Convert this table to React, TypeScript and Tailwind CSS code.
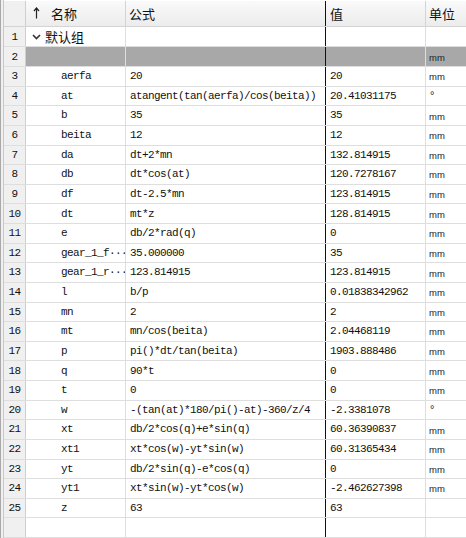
import React from "react";

type Row = { name: string; formula: string; value: string; unit: string };

const ROWS: Row[] = [
  { name: "aerfa", formula: "20", value: "20", unit: "mm" },
  { name: "at", formula: "atangent(tan(aerfa)/cos(beita))", value: "20.41031175", unit: "°" },
  { name: "b", formula: "35", value: "35", unit: "mm" },
  { name: "beita", formula: "12", value: "12", unit: "mm" },
  { name: "da", formula: "dt+2*mn", value: "132.814915", unit: "mm" },
  { name: "db", formula: "dt*cos(at)", value: "120.7278167", unit: "mm" },
  { name: "df", formula: "dt-2.5*mn", value: "123.814915", unit: "mm" },
  { name: "dt", formula: "mt*z", value: "128.814915", unit: "mm" },
  { name: "e", formula: "db/2*rad(q)", value: "0", unit: "mm" },
  { name: "gear_1_f···", formula: "35.000000", value: "35", unit: "mm" },
  { name: "gear_1_r···", formula: "123.814915", value: "123.814915", unit: "mm" },
  { name: "l", formula: "b/p", value: "0.01838342962", unit: "mm" },
  { name: "mn", formula: "2", value: "2", unit: "mm" },
  { name: "mt", formula: "mn/cos(beita)", value: "2.04468119", unit: "mm" },
  { name: "p", formula: "pi()*dt/tan(beita)", value: "1903.888486", unit: "mm" },
  { name: "q", formula: "90*t", value: "0", unit: "mm" },
  { name: "t", formula: "0", value: "0", unit: "mm" },
  { name: "w", formula: "-(tan(at)*180/pi()-at)-360/z/4", value: "-2.3381078", unit: "°" },
  { name: "xt", formula: "db/2*cos(q)+e*sin(q)", value: "60.36390837", unit: "mm" },
  { name: "xt1", formula: "xt*cos(w)-yt*sin(w)", value: "60.31365434", unit: "mm" },
  { name: "yt", formula: "db/2*sin(q)-e*cos(q)", value: "0", unit: "mm" },
  { name: "yt1", formula: "xt*sin(w)-yt*cos(w)", value: "-2.462627398", unit: "mm" },
  { name: "z", formula: "63", value: "63", unit: "" },
];

const mono = "font-['Liberation_Mono',monospace] text-[11px] tracking-[-0.6px] text-[#111]";
const cjk = "font-['Noto_Sans_CJK_SC','Liberation_Sans',sans-serif] text-[13px] text-[#111]";

function UnitText({ unit }: { unit: string }) {
  if (unit === "°") {
    return <span className="pl-[4px] pt-[1px] self-start font-['Liberation_Sans',sans-serif] text-[11px] leading-[14px] text-[#222]">°</span>;
  }
  return <span className="pl-[3px] pt-[2px] font-['Liberation_Sans',sans-serif] text-[9.5px] text-[#222]">{unit}</span>;
}

function NumCell({ n }: { n?: number }) {
  return (
    <div className={`h-full w-[22px] shrink-0 flex items-center justify-center bg-[#f0f0f0] border-r border-[#cfcfcf] ${mono}`}>
      {n}
    </div>
  );
}

function GridRow({ n, children, gray }: { n?: number; children?: React.ReactNode; gray?: boolean }) {
  return (
    <div className="flex h-[20px] border-b border-[#dedede]">
      <NumCell n={n} />
      <div className={`flex flex-1 h-full ${gray ? "bg-[#a8a8a8]" : ""}`}>{children}</div>
    </div>
  );
}

function Cells({ name, formula, value, unit }: { name?: React.ReactNode; formula?: string; value?: string; unit?: string }) {
  return (
    <>
      <div className="w-[100px] shrink-0 flex items-center border-r border-[#dedede] overflow-hidden whitespace-nowrap">{name}</div>
      <div className={`w-[200px] shrink-0 flex items-center pl-[4px] border-r border-[#111] overflow-hidden whitespace-nowrap ${mono}`}>
        {formula}
      </div>
      <div className={`w-[100px] shrink-0 flex items-center pl-[4px] border-r border-[#dedede] whitespace-nowrap ${mono}`}>{value}</div>
      <div className="flex-1 flex items-center">{unit ? <UnitText unit={unit} /> : null}</div>
    </>
  );
}

export default function App() {
  return (
    <div className="w-[466px] h-[538px] overflow-hidden bg-white flex">
      {/* left frame */}
      <div className="w-[4px] shrink-0 h-full bg-[#f0f0f0] border-l border-[#a9a9a9] border-r border-r-[#c8c8c8]" />
      <div className="flex-1 flex flex-col pt-[1px] bg-white">
        {/* header */}
        <div className="flex h-[27px] border-b border-[#d4d4d4] bg-gradient-to-b from-[#fafafa] to-[#ececec]">
          <div className="w-[22px] shrink-0 border-r border-[#cfcfcf] bg-[#f0f0f0]" />
          <div className="w-[100px] shrink-0 flex items-center border-r border-[#d4d4d4]">
            <svg width="7" height="12" viewBox="0 0 7 12" className="ml-[7px] mb-[2px]">
              <path d="M3.5 1 V11.5" stroke="#222" strokeWidth="1.2" />
              <path d="M1 4 L3.5 1 L6 4" stroke="#222" strokeWidth="1.2" fill="none" />
            </svg>
            <span className={`ml-[11px] ${cjk}`}>名称</span>
          </div>
          <div className={`w-[200px] shrink-0 flex items-center pl-[3px] border-r border-[#111] ${cjk}`}>公式</div>
          <div className={`w-[100px] shrink-0 flex items-center pl-[4px] border-r border-[#d4d4d4] ${cjk}`}>值</div>
          <div className={`flex-1 flex items-center pl-[3px] ${cjk}`}>单位</div>
        </div>

        {/* group row */}
        <GridRow n={1}>
          <Cells
            name={
              <span className="flex items-center">
                <svg width="9" height="6" viewBox="0 0 9 6" className="ml-[6px]">
                  <path d="M1 1 L4.5 4.5 L8 1" stroke="#333" strokeWidth="1.6" fill="none" />
                </svg>
                <span className={`ml-[4px] ${cjk}`}>默认组</span>
              </span>
            }
          />
        </GridRow>

        {/* selected row */}
        <GridRow n={2} gray>
          <Cells unit="mm" />
        </GridRow>

        {ROWS.map((r, i) => (
          <GridRow key={r.name} n={i + 3}>
            <Cells name={<span className={`pl-[35px] ${mono}`}>{r.name}</span>} formula={r.formula} value={r.value} unit={r.unit} />
          </GridRow>
        ))}

        <GridRow>
          <Cells />
        </GridRow>
      </div>
    </div>
  );
}
